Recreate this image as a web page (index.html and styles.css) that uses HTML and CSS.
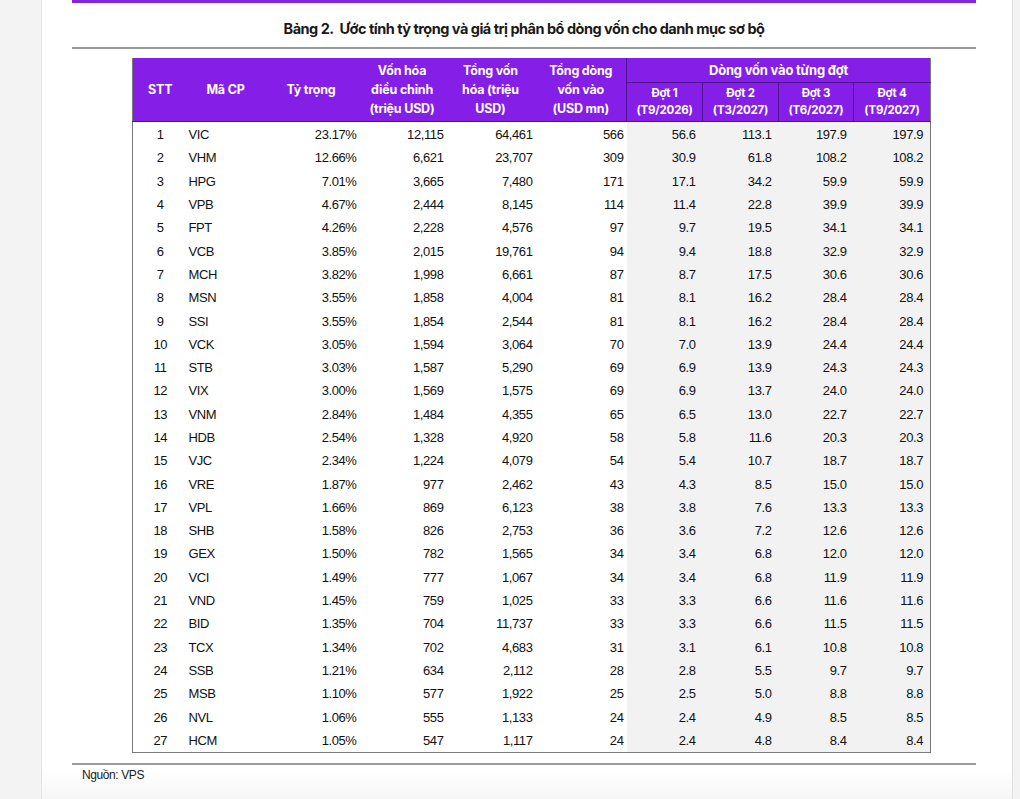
FILE: index.html
```html
<!DOCTYPE html>
<html lang="vi">
<head>
    <meta charset="UTF-8">
    <title>Bảng 2 - Phân bổ dòng vốn</title>
    <link rel="stylesheet" href="styles.css">
</head>
<body>
    <div class="page">
        <div class="content">
            <div class="top-bar"></div>
            <h1 class="title">Bảng 2.&nbsp; Ước tính tỷ trọng và giá trị phân bổ dòng vốn cho danh mục sơ bộ</h1>
            <div class="rule"></div>

            <table class="alloc">
                <colgroup>
                    <col style="width:55px"><col style="width:76px"><col style="width:95px">
                    <col style="width:87px"><col style="width:90px"><col style="width:91px">
                    <col style="width:76px"><col style="width:76px"><col style="width:75px"><col style="width:77px">
                </colgroup>
                <thead>
                    <tr class="h1">
                        <th rowspan="2">STT</th>
                        <th rowspan="2">Mã CP</th>
                        <th rowspan="2">Tỷ trọng</th>
                        <th rowspan="2">Vốn hóa<br>điều chỉnh<br>(triệu USD)</th>
                        <th rowspan="2">Tổng vốn<br>hóa (triệu<br>USD)</th>
                        <th rowspan="2">Tổng dòng<br>vốn vào<br>(USD mn)</th>
                        <th colspan="4" class="group">Dòng vốn vào từng đợt</th>
                    </tr>
                    <tr class="h2">
                        <th class="sub first">Đợt 1<br>(T9/2026)</th>
                        <th class="sub">Đợt 2<br>(T3/2027)</th>
                        <th class="sub">Đợt 3<br>(T6/2027)</th>
                        <th class="sub">Đợt 4<br>(T9/2027)</th>
                    </tr>
                </thead>
                <tbody id="rows"></tbody>
            </table>

            <div class="rule bottom"></div>
            <div class="source">Nguồn: VPS</div>
        </div>
    </div>

    <script>
        // STT, ma, ty trong, von hoa dc, tong von hoa, tong dong von, dot 1-4
        const data = [
            ['VIC', '23.17%', '12,115', '64,461', '566', '56.6', '113.1', '197.9', '197.9'],
            ['VHM', '12.66%', '6,621', '23,707', '309', '30.9', '61.8', '108.2', '108.2'],
            ['HPG', '7.01%', '3,665', '7,480', '171', '17.1', '34.2', '59.9', '59.9'],
            ['VPB', '4.67%', '2,444', '8,145', '114', '11.4', '22.8', '39.9', '39.9'],
            ['FPT', '4.26%', '2,228', '4,576', '97', '9.7', '19.5', '34.1', '34.1'],
            ['VCB', '3.85%', '2,015', '19,761', '94', '9.4', '18.8', '32.9', '32.9'],
            ['MCH', '3.82%', '1,998', '6,661', '87', '8.7', '17.5', '30.6', '30.6'],
            ['MSN', '3.55%', '1,858', '4,004', '81', '8.1', '16.2', '28.4', '28.4'],
            ['SSI', '3.55%', '1,854', '2,544', '81', '8.1', '16.2', '28.4', '28.4'],
            ['VCK', '3.05%', '1,594', '3,064', '70', '7.0', '13.9', '24.4', '24.4'],
            ['STB', '3.03%', '1,587', '5,290', '69', '6.9', '13.9', '24.3', '24.3'],
            ['VIX', '3.00%', '1,569', '1,575', '69', '6.9', '13.7', '24.0', '24.0'],
            ['VNM', '2.84%', '1,484', '4,355', '65', '6.5', '13.0', '22.7', '22.7'],
            ['HDB', '2.54%', '1,328', '4,920', '58', '5.8', '11.6', '20.3', '20.3'],
            ['VJC', '2.34%', '1,224', '4,079', '54', '5.4', '10.7', '18.7', '18.7'],
            ['VRE', '1.87%', '977', '2,462', '43', '4.3', '8.5', '15.0', '15.0'],
            ['VPL', '1.66%', '869', '6,123', '38', '3.8', '7.6', '13.3', '13.3'],
            ['SHB', '1.58%', '826', '2,753', '36', '3.6', '7.2', '12.6', '12.6'],
            ['GEX', '1.50%', '782', '1,565', '34', '3.4', '6.8', '12.0', '12.0'],
            ['VCI', '1.49%', '777', '1,067', '34', '3.4', '6.8', '11.9', '11.9'],
            ['VND', '1.45%', '759', '1,025', '33', '3.3', '6.6', '11.6', '11.6'],
            ['BID', '1.35%', '704', '11,737', '33', '3.3', '6.6', '11.5', '11.5'],
            ['TCX', '1.34%', '702', '4,683', '31', '3.1', '6.1', '10.8', '10.8'],
            ['SSB', '1.21%', '634', '2,112', '28', '2.8', '5.5', '9.7', '9.7'],
            ['MSB', '1.10%', '577', '1,922', '25', '2.5', '5.0', '8.8', '8.8'],
            ['NVL', '1.06%', '555', '1,133', '24', '2.4', '4.9', '8.5', '8.5'],
            ['HCM', '1.05%', '547', '1,117', '24', '2.4', '4.8', '8.4', '8.4']
        ];

        const tbody = document.getElementById('rows');
        data.forEach((r, i) => {
            const tr = document.createElement('tr');
            let html = `<td class="stt">${i + 1}</td><td class="code">${r[0]}</td>`;
            for (let k = 1; k < r.length; k++) {
                const cls = k >= 5 ? 'num shade' : 'num';
                html += `<td class="${cls}">${r[k]}</td>`;
            }
            tr.innerHTML = html;
            tbody.appendChild(tr);
        });
    </script>
</body>
</html>
```

FILE: styles.css
```css
html, body {
    margin: 0;
    padding: 0;
}
body {
    background-color: #f3f3f3;
    font-family: "Liberation Sans", Arial, sans-serif;
    color: #111;
}
.page {
    margin-left: 41px;
    width: 972px;
    height: 799px;
    background: linear-gradient(to bottom, #fff 0, #fff 770px, #f6f6f6 799px);
    border-left: 1px solid #e6e6e6;
    border-right: 1px solid #e0e0e0;
    box-sizing: border-box;
    overflow: hidden;
}
.content {
    margin-left: 30px;
    width: 904px;
}
.top-bar {
    height: 3px;
    background-color: #8224e3;
}
.title {
    margin: 0;
    height: 44px;
    line-height: 52px;
    text-align: center;
    font-family: Inter, "Noto Sans", sans-serif;
    font-size: 14.5px;
    font-weight: 700;
    letter-spacing: -0.5px;
    color: #1a1a1a;
}
.rule {
    height: 2px;
    background-color: #9a9a9a;
}
.alloc {
    margin: 9px 0 0 60px;
    border-collapse: collapse;
    table-layout: fixed;
    width: 798px;
    font-size: 13px;
    letter-spacing: -0.4px;
    border-left: 1px solid #7a7a7a;
    border-right: 1px solid #7a7a7a;
    border-bottom: 1px solid #7a7a7a;
}
.alloc th {
    background-color: #851ee7;
    color: #fff;
    font-family: Inter, "Noto Sans", sans-serif;
    font-weight: 700;
    font-size: 12.5px;
    letter-spacing: -0.2px;
    line-height: 19px;
    padding: 0;
    text-align: center;
    vertical-align: middle;
    border: none;
}
.alloc thead .h1 th {
    height: 24px;
}
.alloc thead .h1 th.group {
    font-size: 13px;
    border-left: 1px solid #4e1190;
    border-bottom: 1px solid #4e1190;
}
.alloc thead .h2 th {
    height: 38px;
    font-size: 11.5px;
    line-height: 17px;
    border-left: 1px solid #4e1190;
    border-bottom: 1px solid #4e1190;
}
.alloc thead .h1 th[rowspan] {
    border-bottom: 1px solid #4e1190;
}
.alloc tbody tr:first-child td {
    padding-top: 1px;
}
.alloc td {
    height: 23.3px;
    padding: 0 3px 0 0;
    white-space: nowrap;
}
.alloc td.stt {
    text-align: center;
    padding: 0;
}
.alloc td.code {
    text-align: left;
    padding-left: 1px;
}
.alloc td.num {
    text-align: right;
}
.alloc td.num:nth-child(3),
.alloc td.num:nth-child(4) {
    padding-right: 2px;
}
.alloc td.shade {
    background-color: #f2f2f2;
    padding-right: 7px;
}
.rule.bottom {
    margin-top: 10px;
}
.source {
    margin: 3px 0 0 10px;
    font-size: 12px;
    letter-spacing: -0.4px;
    color: #1a1a1a;
}
```
